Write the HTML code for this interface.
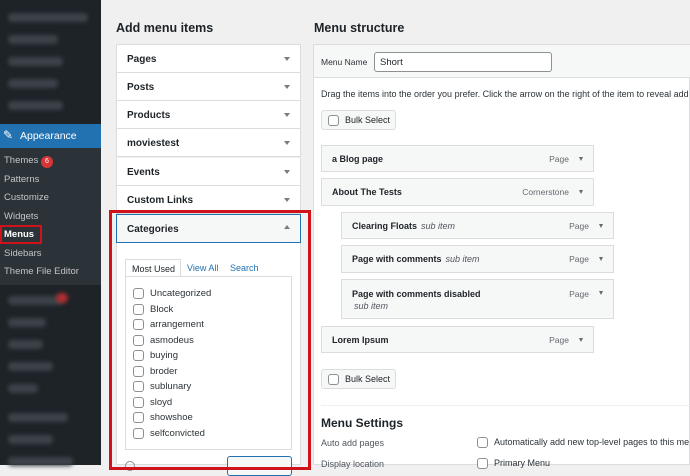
<!DOCTYPE html>
<html><head><meta charset="utf-8"><style>
*{box-sizing:border-box;margin:0;padding:0}
body{width:690px;height:465px;overflow:hidden;background:#f0f0f1;font-family:"Liberation Sans",sans-serif;font-size:9px;color:#1d2327;position:relative}
.a{position:absolute}
.side{left:0;top:0;width:101px;height:465px;background:#1d2327}
.blur{position:absolute;height:9px;background:#3c434a;border-radius:4px;filter:blur(2px)}
.sub{left:0;top:148px;width:101px;height:137px;background:#2c3338}
.sub div{position:absolute;left:4px;color:#c3c4c7;font-size:9.5px}
.ph{left:116px;width:185px;height:28px;background:#fff;border:1px solid #dcdcde;border-top:none;font-weight:bold;font-size:10px;padding:9px 0 0 10px}
.ph:after{content:"";position:absolute;right:10px;top:12px;border:3px solid transparent;border-top:4px solid #787c82}
.cb{display:inline-block;width:11px;height:11px;border:1px solid #8c8f94;border-radius:3px;vertical-align:middle;margin-right:6px;background:#fff}
.cat{position:absolute;left:133px;font-size:9.5px;color:#2c3338}
.it{position:absolute;background:#f6f7f7;border:1px solid #dcdcde;font-weight:bold;font-size:9px;padding:0 0 0 10px}
.it .t{position:absolute;right:24px;top:0;font-weight:normal;color:#646970;font-size:8.5px}
.it:after{content:"";position:absolute;right:10px;top:11px;border:2.5px solid transparent;border-top:4px solid #646970}
.it i{font-weight:normal;color:#50575e;margin-left:4px}
</style></head><body>
<div class="a side">
<div class="blur" style="left:8px;top:13px;width:80px"></div>
<div class="blur" style="left:8px;top:35px;width:50px"></div>
<div class="blur" style="left:8px;top:57px;width:55px"></div>
<div class="blur" style="left:8px;top:79px;width:50px"></div>
<div class="blur" style="left:8px;top:101px;width:55px"></div>
<div class="a" style="left:0;top:124px;width:101px;height:24px;background:#2271b1;color:#fff;font-size:10.5px;padding:6px 0 0 20px">Appearance</div>
<div class="a" style="left:3px;top:128px;color:#fff;font-size:12px">✎</div>
<div class="a" style="left:96px;top:131px;border:5px solid transparent;border-right:5px solid #f0f0f1"></div>
<div class="a sub">
<div style="top:7px">Themes <span style="display:inline-block;background:#d63638;color:#fff;border-radius:6px;width:12px;height:12px;font-size:7px;text-align:center;line-height:12px">6</span></div>
<div style="top:26px">Patterns</div>
<div style="top:44px">Customize</div>
<div style="top:63px">Widgets</div>
<div style="top:81px;color:#fff;font-weight:bold">Menus</div>
<div style="left:0;top:77px;width:42px;height:19px;border:2px solid #d0131b;background:none"></div>
<div style="top:100px">Sidebars</div>
<div style="top:118px">Theme File Editor</div>
</div>
<div class="blur" style="left:8px;top:296px;width:55px"></div>
<div class="a" style="left:56px;top:293px;width:12px;height:10px;background:#b32d2e;border-radius:5px;filter:blur(2px)"></div>
<div class="blur" style="left:8px;top:318px;width:38px"></div>
<div class="blur" style="left:8px;top:340px;width:35px"></div>
<div class="blur" style="left:8px;top:362px;width:45px"></div>
<div class="blur" style="left:8px;top:384px;width:30px"></div>
<div class="blur" style="left:8px;top:413px;width:60px"></div>
<div class="blur" style="left:8px;top:435px;width:45px"></div>
<div class="blur" style="left:8px;top:457px;width:65px"></div>
</div>
<div class="a" style="left:116px;top:21px;font-size:12.5px;font-weight:bold">Add menu items</div>
<div class="a" style="left:116px;top:44px;width:185px;height:1px;background:#dcdcde"></div>
<div class="a ph" style="top:45px">Pages</div>
<div class="a ph" style="top:73px">Posts</div>
<div class="a ph" style="top:101px">Products</div>
<div class="a ph" style="top:129px">moviestest</div>
<div class="a ph" style="top:158px">Events</div>
<div class="a ph" style="top:186px">Custom Links</div>
<div class="a" style="left:116px;top:214px;width:185px;height:251px;background:#fff;border:1px solid #dcdcde"></div>
<div class="a" style="left:116px;top:214px;width:185px;height:29px;background:#f6f7f7;border:1px solid #2271b1;font-weight:bold;font-size:10px;padding:9px 0 0 10px">Categories</div>
<div class="a" style="left:284px;top:225px;border:3px solid transparent;border-bottom:4px solid #787c82;border-top:none"></div>
<div class="a" style="left:125px;top:259px;width:56px;height:18px;border:1px solid #dcdcde;border-bottom:none;background:#fff;font-size:9px;padding:4px 0 0 6px">Most Used</div>
<div class="a" style="left:187px;top:263px;font-size:9px;color:#2271b1">View All</div>
<div class="a" style="left:230px;top:263px;font-size:9px;color:#2271b1">Search</div>
<div class="a" style="left:125px;top:276px;width:167px;height:174px;border:1px solid #dcdcde;background:#fff"></div>
<div class="cat" style="top:288px"><span class="cb"></span>Uncategorized</div>
<div class="cat" style="top:304px"><span class="cb"></span>Block</div>
<div class="cat" style="top:319px"><span class="cb"></span>arrangement</div>
<div class="cat" style="top:335px"><span class="cb"></span>asmodeus</div>
<div class="cat" style="top:350px"><span class="cb"></span>buying</div>
<div class="cat" style="top:366px"><span class="cb"></span>broder</div>
<div class="cat" style="top:381px"><span class="cb"></span>sublunary</div>
<div class="cat" style="top:397px"><span class="cb"></span>sloyd</div>
<div class="cat" style="top:412px"><span class="cb"></span>showshoe</div>
<div class="cat" style="top:428px"><span class="cb"></span>selfconvicted</div>
<div class="a" style="left:125px;top:461px;width:10px;height:10px;border:1px solid #8c8f94;border-radius:50%"></div>
<div class="a" style="left:227px;top:456px;width:65px;height:20px;border:1px solid #2271b1;border-radius:3px;background:#f6f7f7"></div>
<div class="a" style="left:109px;top:210px;width:202px;height:260px;border:3px solid #d0131b"></div>

<div class="a" style="left:314px;top:21px;font-size:12.5px;font-weight:bold">Menu structure</div>
<div class="a" style="left:313px;top:44px;width:377px;height:421px;background:#fff;border:1px solid #dcdcde"></div>
<div class="a" style="left:314px;top:45px;width:376px;height:33px;background:#f6f7f7;border-bottom:1px solid #dcdcde"></div>
<div class="a" style="left:321px;top:57px;font-size:8.5px;color:#2c3338">Menu Name</div>
<div class="a" style="left:374px;top:52px;width:178px;height:20px;border:1px solid #8c8f94;border-radius:3px;background:#fff;font-size:9.5px;padding:4px 0 0 5px">Short</div>
<div class="a" style="left:321px;top:89px;font-size:9px;color:#2c3338;white-space:nowrap">Drag the items into the order you prefer. Click the arrow on the right of the item to reveal add</div>
<div class="a" style="left:321px;top:110px;width:75px;height:20px;border:1px solid #dcdcde;border-radius:3px;background:#f6f7f7;font-size:9px;padding:4px 0 0 6px"><span class="cb"></span>Bulk Select</div>
<div class="it" style="left:321px;top:145px;width:273px;height:27px;line-height:26px">a Blog page<span class="t">Page</span></div>
<div class="it" style="left:321px;top:178px;width:273px;height:28px;line-height:26px">About The Tests<span class="t">Cornerstone</span></div>
<div class="it" style="left:341px;top:212px;width:273px;height:27px;line-height:26px">Clearing Floats<i>sub item</i><span class="t">Page</span></div>
<div class="it" style="left:341px;top:245px;width:273px;height:28px;line-height:26px">Page with comments<i>sub item</i><span class="t">Page</span></div>
<div class="it" style="left:341px;top:279px;width:273px;height:40px;padding-top:8px;line-height:12px">Page with comments disabled<br><i style="margin-left:2px">sub item</i><span class="t" style="top:8px">Page</span></div>
<div class="it" style="left:321px;top:326px;width:273px;height:27px;line-height:26px">Lorem Ipsum<span class="t">Page</span></div>
<div class="a" style="left:321px;top:369px;width:75px;height:20px;border:1px solid #dcdcde;border-radius:3px;background:#f6f7f7;font-size:9px;padding:4px 0 0 6px"><span class="cb"></span>Bulk Select</div>
<div class="a" style="left:321px;top:405px;width:369px;height:1px;background:#f0f0f1"></div>
<div class="a" style="left:321px;top:416px;font-size:12px;font-weight:bold">Menu Settings</div>
<div class="a" style="left:321px;top:438px;font-size:9px;color:#50575e">Auto add pages</div>
<div class="a" style="left:477px;top:437px;font-size:9px;color:#2c3338;white-space:nowrap"><span class="cb"></span>Automatically add new top-level pages to this me</div>
<div class="a" style="left:321px;top:459px;font-size:9px;color:#50575e">Display location</div>
<div class="a" style="left:477px;top:458px;font-size:9px;color:#2c3338;white-space:nowrap"><span class="cb"></span>Primary Menu</div>
</body></html>
